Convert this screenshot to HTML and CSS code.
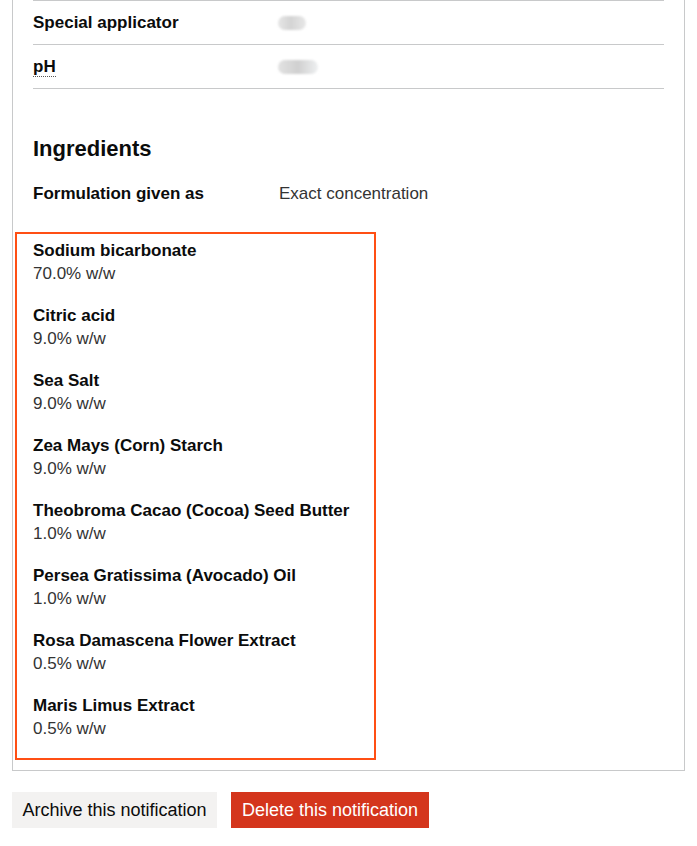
FILE: index.html
```html
<!DOCTYPE html>
<html lang="en">
<head>
<meta charset="utf-8">
<link rel="stylesheet" href="styles.css">
</head>
<body>
<div class="page">
  <div class="panel">
    <dl class="summary">
      <div class="row">
        <dt class="key">Special applicator</dt>
        <dd class="value"><span class="blur blur-a"></span></dd>
      </div>
      <div class="row">
        <dt class="key"><abbr class="abbr" title="potential of hydrogen">pH</abbr></dt>
        <dd class="value"><span class="blur blur-b"></span></dd>
      </div>
    </dl>

    <h2 class="heading">Ingredients</h2>
    <div class="formulation">
      <span class="f-key">Formulation given as</span>
      <span class="f-value">Exact concentration</span>
    </div>

    <div class="highlight">
      <div class="ing"><div class="ing-name">Sodium bicarbonate</div><div class="ing-val">70.0% w/w</div></div>
      <div class="ing"><div class="ing-name">Citric acid</div><div class="ing-val">9.0% w/w</div></div>
      <div class="ing"><div class="ing-name">Sea Salt</div><div class="ing-val">9.0% w/w</div></div>
      <div class="ing"><div class="ing-name">Zea Mays (Corn) Starch</div><div class="ing-val">9.0% w/w</div></div>
      <div class="ing"><div class="ing-name">Theobroma Cacao (Cocoa) Seed Butter</div><div class="ing-val">1.0% w/w</div></div>
      <div class="ing"><div class="ing-name">Persea Gratissima (Avocado) Oil</div><div class="ing-val">1.0% w/w</div></div>
      <div class="ing"><div class="ing-name">Rosa Damascena Flower Extract</div><div class="ing-val">0.5% w/w</div></div>
      <div class="ing"><div class="ing-name">Maris Limus Extract</div><div class="ing-val">0.5% w/w</div></div>
    </div>
  </div>

  <div class="actions">
    <button class="btn btn-secondary" type="button">Archive this notification</button>
    <button class="btn btn-warning" type="button">Delete this notification</button>
  </div>
</div>
</body>
</html>
```

FILE: styles.css
```css
* { box-sizing: border-box; }
html, body { margin: 0; padding: 0; background: #ffffff; }
body {
  font-family: "Liberation Sans", Arial, sans-serif;
  color: #0b0c0c;
  font-size: 17px;
  line-height: 23px;
}
.page { padding-left: 12px; width: 685px; }
.panel {
  border: 1px solid #c8c9ca;
  border-top: none;
  padding: 0 20px 10px 20px;
}
.summary { margin: 0; }
.row {
  display: flex;
  border-top: 1px solid #c8c9ca;
  padding: 10px 0 10px 0;
}
.row:last-child { border-bottom: 1px solid #c8c9ca; }
.key {
  width: 245px;
  font-weight: 700;
  margin: 0;
}
.value { margin: 0; display: flex; align-items: center; }
.abbr {
  text-decoration: none;
  border-bottom: 1px dotted #555;
}
.blur {
  display: inline-block;
  height: 14px;
  border-radius: 7px;
  background: linear-gradient(90deg, #e6e6e6 0%, #d4d4d4 45%, #e8e8e8 100%);
  filter: blur(1px);
}
.blur-a { width: 28px; }
.blur-b { width: 40px; background: linear-gradient(90deg, #e2e2e2 0%, #d0d0d0 50%, #eef0f1 100%); }

.heading {
  font-size: 22px;
  line-height: 28px;
  font-weight: 700;
  margin: 46px 0 0 0;
}
.formulation {
  display: flex;
  margin-top: 19px;
}
.f-key { width: 246px; font-weight: 700; }
.f-value { color: #333; }

.highlight {
  margin: 27px 0 0 -18px;
  width: 361px;
  border: 2px solid #ff4f14;
  padding: 5px 16px 12px 16px;
}
.ing { padding-bottom: 19px; }
.ing:last-child { padding-bottom: 6px; }
.ing-name { font-weight: 700; }
.ing-val { color: #333; }

.actions {
  display: flex;
  gap: 14px;
  margin-top: 21px;
}
.btn {
  font-family: "Liberation Sans", Arial, sans-serif;
  font-size: 18px;
  line-height: 22px;
  border: none;
  padding: 7px 10px;
  margin: 0;
  cursor: pointer;
  text-align: center;
}
.btn-secondary {
  background: #f3f2f1;
  color: #0b0c0c;
  box-shadow: 0 2px 0 #929191;
  width: 205px;
}
.btn-warning {
  background: #d4351c;
  color: #ffffff;
  box-shadow: 0 2px 0 #55150b;
  width: 198px;
}
```
